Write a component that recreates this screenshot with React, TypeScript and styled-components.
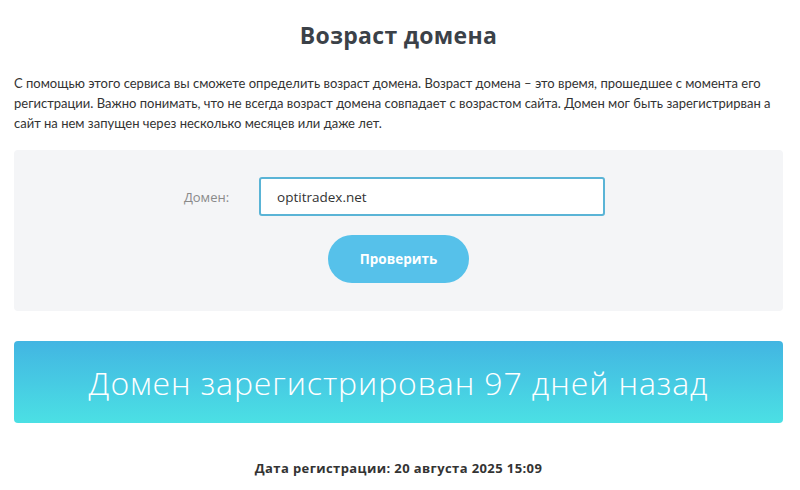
import React, { useState } from "react";
import styled, { createGlobalStyle } from "styled-components";

const GlobalStyle = createGlobalStyle`
  body {
    margin: 0;
    background: #ffffff;
    font-family: "Lato", "Open Sans", sans-serif;
    color: #333333;
  }
`;

const App = () => {
  const [domain, setDomain] = useState("optitradex.net");
  const days = 97;

  return (
    <>
      <GlobalStyle />
      <Page>
        <Title>Возраст домена</Title>
        <Intro>
          С помощью этого сервиса вы сможете определить возраст домена. Возраст
          домена – это время, прошедшее с момента его регистрации. Важно
          понимать, что не всегда возраст домена совпадает с возрастом сайта.
          Домен мог быть зарегистрирван а сайт на нем запущен через несколько
          месяцев или даже лет.
        </Intro>

        <FormPanel onSubmit={(e) => e.preventDefault()}>
          <FieldRow>
            <Label htmlFor="domain">Домен:</Label>
            <Input
              id="domain"
              value={domain}
              onChange={(e) => setDomain(e.target.value)}
            />
          </FieldRow>
          <CheckButton type="submit">Проверить</CheckButton>
        </FormPanel>

        <ResultBanner>Домен зарегистрирован {days} дней назад</ResultBanner>

        <RegDate>Дата регистрации: 20 августа 2025 15:09</RegDate>
      </Page>
    </>
  );
};

const Page = styled.div`
  padding: 0 17px 0 14px;
  display: flex;
  flex-direction: column;
`;

const Title = styled.h1`
  margin: 20px 0 0;
  text-align: center;
  font-family: "Open Sans", sans-serif;
  font-size: 23px;
  font-weight: 700;
  letter-spacing: 0.3px;
  line-height: 30px;
  color: #3b4148;
`;

const Intro = styled.p`
  margin: 23px 0 0;
  font-size: 13px;
  line-height: 20px;
  color: #333333;
`;

const FormPanel = styled.form`
  margin-top: 17px;
  background: #f4f5f7;
  border-radius: 4px;
  padding: 27px 0 28px;
  display: flex;
  flex-direction: column;
  align-items: center;
  gap: 19px;
`;

const FieldRow = styled.div`
  display: flex;
  align-items: center;
  gap: 30px;
  padding-right: 8px;
`;

const Label = styled.label`
  font-family: "Open Sans", sans-serif;
  font-size: 13px;
  color: #8a8a8a;
`;

const Input = styled.input`
  width: 346px;
  height: 39px;
  box-sizing: border-box;
  border: 2px solid #5ab4d6;
  border-radius: 3px;
  padding: 0 16px;
  font-family: "Open Sans", sans-serif;
  font-size: 13.5px;
  color: #333333;
  background: #ffffff;
  outline: none;
`;

const CheckButton = styled.button`
  width: 141px;
  height: 48px;
  border: none;
  border-radius: 24px;
  background: #56c1ea;
  color: #ffffff;
  font-family: "Open Sans", sans-serif;
  font-size: 13.5px;
  font-weight: 700;
  cursor: pointer;
`;

const ResultBanner = styled.div`
  margin-top: 30px;
  height: 82px;
  border-radius: 4px;
  background: linear-gradient(180deg, #42b5e2 0%, #4be0e4 100%);
  display: flex;
  align-items: center;
  justify-content: center;
  color: #ffffff;
  font-family: "Open Sans", sans-serif;
  font-size: 32px;
  font-weight: 300;
  letter-spacing: 0.9px;
`;

const RegDate = styled.div`
  margin-top: 36px;
  text-align: center;
  font-family: "Open Sans", sans-serif;
  font-size: 13px;
  font-weight: 700;
  letter-spacing: 0.4px;
  color: #333333;
`;

export default App;
